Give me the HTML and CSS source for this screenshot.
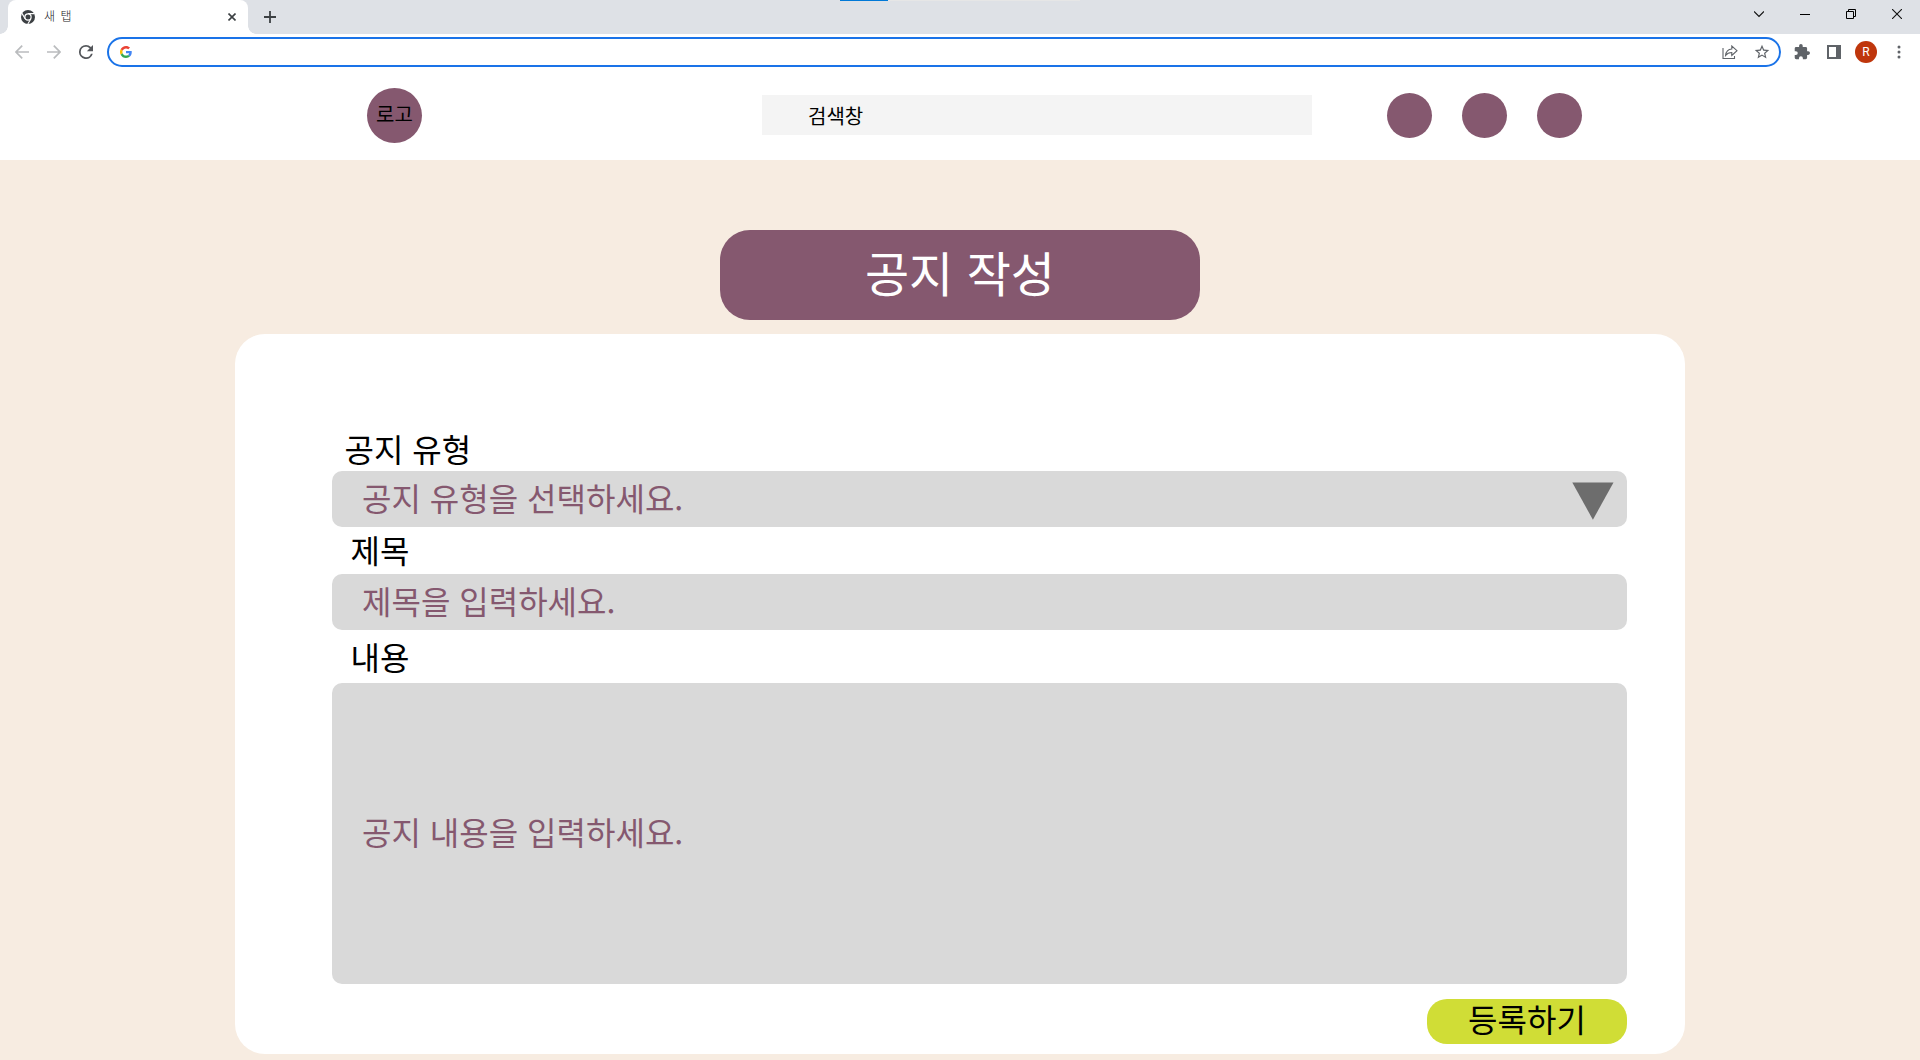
FILE: index.html
```html
<!DOCTYPE html>
<html lang="ko">
<head>
<meta charset="utf-8">
<title>공지 작성</title>
<link rel="stylesheet" href="styles.css">
</head>
<body>
<div class="browser">
  <div class="tab-strip">
    <div class="tab">
      <svg class="tab-icon" width="14" height="14" viewBox="0 0 14 14"><circle cx="7" cy="7" r="7" fill="#3c4043"/><path d="M7 3.6h6.4M4.1 8.7 1 3.4M9.9 8.7 6.8 14" stroke="#fff" stroke-width="1.1"/><circle cx="7" cy="7" r="3.1" fill="#3c4043" stroke="#fff" stroke-width="1.2"/></svg>
      <span class="tab-title">새 탭</span>
      <svg width="8" height="8" viewBox="0 0 8 8"><path d="M.5.5l7 7M7.500.5l-7 7" stroke="#3c4043" stroke-width="1.6"/></svg>
    </div>
    <svg class="new-tab" width="12" height="12" viewBox="0 0 12 12"><path d="M6 0v12M0 6h12" stroke="#3c4043" stroke-width="1.8"/></svg>
    <div class="load-track"><div class="load-bar"></div></div>
    <div class="window-buttons">
      <svg width="10" height="10" viewBox="0 0 10 10"><path d="M0 2.500l5 5 5-5" fill="none" stroke="#111" stroke-width="1.2"/></svg>
      <svg width="10" height="10" viewBox="0 0 10 10"><path d="M0 5.500h10" stroke="#000"/></svg>
      <svg width="10" height="10" viewBox="0 0 10 10"><path d="M.5 2.500h7v7h-7zM2.500 2.500v-2h7v7h-2" fill="none" stroke="#000"/></svg>
      <svg width="10" height="10" viewBox="0 0 10 10"><path d="M0 0l10 10M10 0L0 10" stroke="#111" stroke-width="1.1"/></svg>
    </div>
  </div>
  <div class="toolbar">
    <div class="nav-buttons">
      <svg width="14" height="14" viewBox="0 0 14 14"><path d="M14 7H1.500M7.200.7L1 7l6.200 6.300" fill="none" stroke="#babcbe" stroke-width="1.7"/></svg>
      <svg width="14" height="14" viewBox="0 0 14 14"><path d="M0 7h12.500M6.800.7L13 7l-6.200 6.300" fill="none" stroke="#babcbe" stroke-width="1.7"/></svg>
      <svg width="14" height="14" viewBox="4 4 16 16"><path fill="#54575b" d="M17.650 6.350A7.960 7.960 0 0 0 12 4a8 8 0 1 0 7.730 10h-2.080A6 6 0 1 1 12 6c1.660 0 3.140.69 4.220 1.780L13 11h7V4z"/></svg>
    </div>
    <div class="omnibox">
      <svg width="12" height="12" viewBox="0 0 48 48"><path fill="#ea4335" d="M24 9.500c3.540 0 6.710 1.220 9.210 3.600l6.850-6.850C35.900 2.380 30.470 0 24 0 14.620 0 6.510 5.380 2.560 13.220l7.980 6.190C12.430 13.720 17.740 9.500 24 9.500z"/><path fill="#4285f4" d="M46.980 24.550c0-1.570-.15-3.090-.38-4.550H24v9.020h12.940c-.58 2.960-2.260 5.480-4.780 7.180l7.730 6c4.510-4.180 7.090-10.360 7.090-17.650z"/><path fill="#fbbc05" d="M10.530 28.590a14.500 14.500 0 0 1 0-9.180l-7.980-6.190a24 24 0 0 0 0 21.560z"/><path fill="#34a853" d="M24 48c6.480 0 11.930-2.130 15.890-5.810l-7.730-6c-2.150 1.450-4.920 2.300-8.160 2.300-6.260 0-11.570-4.220-13.470-9.910l-7.980 6.190C6.510 42.620 14.620 48 24 48z"/></svg>
      <div class="omnibox-actions">
        <svg width="16" height="14" viewBox="0 0 16 14"><path d="M1 3v10.500h11.500V11M9.800 1v3C6 4.300 4 6.300 3.600 10.400 5.200 8.300 7 7.600 9.800 7.500v2.900L15 5.700z" fill="none" stroke="#5f6368" stroke-width="1.100"/></svg>
        <svg width="16" height="16" viewBox="1 1 22 22"><path fill="#5f6368" d="M22 9.240l-7.190-.62L12 2 9.190 8.630 2 9.240l5.460 4.730L5.820 21 12 17.270 18.180 21l-1.630-7.030zM12 15.400l-3.760 2.270 1-4.280-3.320-2.880 4.380-.38L12 6.100l1.710 4.040 4.380.38-3.320 2.880 1 4.280z"/></svg>
      </div>
    </div>
    <div class="extensions">
      <svg width="16" height="16" viewBox="1 1 22 22"><path fill="#5f6368" d="M20.500 11H19V7a2 2 0 0 0-2-2h-4V3.500a2.500 2.500 0 0 0-5 0V5H4a2 2 0 0 0-1.990 2v3.800H3.500a2.700 2.700 0 0 1 0 5.400H2V20a2 2 0 0 0 2 2h3.800v-1.500a2.700 2.700 0 0 1 5.400 0V22H17a2 2 0 0 0 2-2v-4h1.500a2.500 2.500 0 0 0 0-5z"/></svg>
      <svg width="14" height="14" viewBox="0 0 14 14"><path fill="#5f6368" fill-rule="evenodd" d="M0 0h14v14H0zM2 2v10h7V2z"/></svg>
      <span class="avatar">R</span>
      <svg width="4" height="14" viewBox="0 0 4 14" fill="#5f6368"><circle cx="2" cy="2" r="1.500"/><circle cx="2" cy="7" r="1.500"/><circle cx="2" cy="12" r="1.500"/></svg>
    </div>
  </div>
</div>
<header class="site-header">
  <div class="logo">로고</div>
  <div class="search">검색창</div>
  <nav class="menu"><span class="menu-dot"></span><span class="menu-dot"></span><span class="menu-dot"></span></nav>
</header>
<main class="page">
  <h1 class="page-title">공지 작성</h1>
  <section class="card">
    <div class="label label-type">공지 유형</div>
    <div class="field">공지 유형을 선택하세요.<svg width="42" height="38" viewBox="0 0 42 38"><path fill="#6d6d6d" d="M.3.500h41.200L20.900 37.700z"/></svg></div>
    <div class="label label-title">제목</div>
    <div class="field">제목을 입력하세요.</div>
    <div class="label label-body">내용</div>
    <div class="field field-body">공지 내용을 입력하세요.</div>
    <div class="submit">등록하기</div>
  </section>
</main>
</body>
</html>
```
FILE: styles.css
```css
* { box-sizing: border-box; }

body {
  margin: 0;
  width: 1920px;
  height: 1060px;
  overflow: hidden;
  background: #f7ece1;
  color: #000;
  font-family: "Noto Sans CJK KR", sans-serif;
}

svg { display: block; flex: none; }

.browser { height: 70px; background: #fff; }

.tab-strip {
  position: relative;
  display: flex;
  height: 34px;
  padding-left: 8px;
  background: #dee1e6;
}

.tab {
  position: relative;
  display: flex;
  align-items: center;
  width: 240px;
  height: 34px;
  padding: 0 12px 0 13px;
  border-radius: 8px 8px 0 0;
  background: #fff;
}

.tab::before,
.tab::after {
  content: "";
  position: absolute;
  bottom: 0;
  width: 8px;
  height: 8px;
}

.tab::before { left: -8px; background: radial-gradient(circle at 0 0, transparent 7.5px, #fff 8px); }
.tab::after { right: -8px; background: radial-gradient(circle at 100% 0, transparent 7.5px, #fff 8px); }

.tab-title {
  flex: 1;
  margin-left: 9px;
  font-size: 12px;
  font-weight: 300;
  line-height: 16px;
  padding-bottom: 2px;
  word-spacing: 2px;
  color: #202124;
}

.new-tab { margin: 11px 0 0 16px; }

.load-track {
  position: absolute;
  top: 0;
  left: 840px;
  width: 240px;
  height: 1px;
  background: #e6e6e6;
}

.load-bar { width: 48px; height: 1px; background: #0078d7; }

.window-buttons {
  display: flex;
  gap: 36px;
  margin: 9px 18px 0 auto;
}

.toolbar {
  display: flex;
  align-items: center;
  height: 36px;
  padding-left: 15px;
}

.nav-buttons { display: flex; gap: 18px; width: 92px; }

.omnibox {
  display: flex;
  align-items: center;
  justify-content: space-between;
  width: 1674px;
  height: 30px;
  padding: 0 9px 0 11px;
  border: 2px solid #1a73e8;
  border-radius: 15px;
}

.omnibox-actions { display: flex; align-items: center; gap: 16px; }

.extensions {
  display: flex;
  align-items: center;
  gap: 17px;
  margin-left: 13px;
}

.avatar {
  width: 22px;
  height: 22px;
  margin: 0 3px 0 -3px;
  border-radius: 50%;
  background: #bf360c;
  color: #fff;
  font: 12px/22px Roboto, sans-serif;
  text-align: center;
}

.site-header {
  display: flex;
  height: 90px;
  padding-left: 367px;
  background: #fff;
  font-size: 20px;
}

.logo {
  width: 55px;
  height: 55px;
  margin-top: 18px;
  border-radius: 50%;
  background: #85586f;
  line-height: 52px;
  text-align: center;
}

.search {
  width: 550px;
  height: 40px;
  margin: 25px 0 0 340px;
  padding-left: 46px;
  background: #f4f4f4;
  line-height: 42px;
}

.menu { display: flex; gap: 30px; margin: 23px 0 0 75px; }

.menu-dot {
  width: 45px;
  height: 45px;
  border-radius: 50%;
  background: #85586f;
}

.page { padding-top: 70px; }

.page-title {
  width: 480px;
  height: 90px;
  margin: 0 auto 14px;
  border-radius: 30px;
  background: #85586f;
  color: #fff;
  font-size: 48px;
  font-weight: 400;
  line-height: 82px;
  text-align: center;
}

.card {
  width: 1450px;
  height: 720px;
  margin: 0 auto;
  padding: 91px 58px 0 97px;
  border-radius: 30px;
  background: #fff;
  font-size: 32px;
}

.label { padding-left: 18.5px; }
.label-type { height: 46px; padding-left: 12.5px; line-height: 46px; }
.label-title { height: 47px; line-height: 44px; }
.label-body { height: 53px; line-height: 52px; }

.field {
  display: flex;
  justify-content: space-between;
  height: 56px;
  padding: 0 13px 0 30px;
  border-radius: 10px;
  background: #d9d9d9;
  color: #85586f;
  line-height: 52px;
}

.field svg { margin-top: 11px; }

.field-body { height: 301px; line-height: 297px; }

.submit {
  width: 200px;
  height: 45px;
  margin: 15px 0 0 auto;
  border-radius: 20px;
  background: #d0dd36;
  line-height: 38px;
  text-align: center;
}
```
